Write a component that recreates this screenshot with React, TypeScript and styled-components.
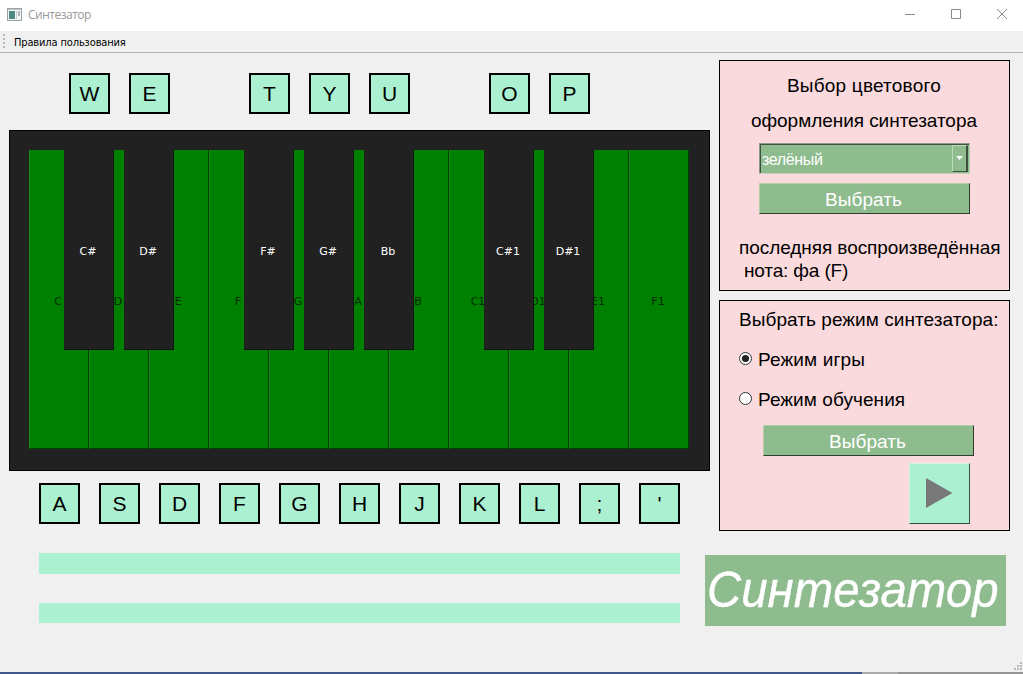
import React from "react";
import styled, { createGlobalStyle } from "styled-components";

const GlobalStyle = createGlobalStyle`
  * { box-sizing: border-box; }
  body { margin: 0; background: #f0f0f0; overflow: hidden; }
`;

const Window = styled.div`
  width: 1023px;
  height: 674px;
  display: flex;
  flex-direction: column;
  background: #f0f0f0;
  color: #000;
  font-family: "Liberation Sans", Arial, sans-serif;
  white-space: nowrap;
`;

const TitleBar = styled.header`
  height: 31px;
  flex: none;
  display: flex;
  align-items: center;
  padding: 0 15px 3px 7px;
  background: #fff;
`;

const AppIcon = styled.svg`
  width: 15px;
  height: 13px;
  margin-right: 6px;
  flex: none;
`;

const Title = styled.span`
  flex: 1;
  color: #999;
  font: 12px/16px "Open Sans", sans-serif;
  letter-spacing: -0.5px;
  padding-top: 2px;
`;

const WindowControls = styled.div`
  display: flex;
  gap: 34px;
`;

const ControlIcon = styled.svg`
  width: 12px;
  height: 12px;
  fill: none;
  stroke: #8a8a8a;
`;

const MenuBar = styled.nav`
  height: 22px;
  flex: none;
  display: flex;
  align-items: center;
  padding-left: 3px;
  border-bottom: 1px solid #b6b3b8;
`;

const Handle = styled.svg`
  width: 3px;
  height: 15px;
  margin-right: 8px;
  fill: #b8b8b8;
`;

const MenuItem = styled.span`
  font: 11px/14px "DejaVu Sans Condensed", "DejaVu Sans", sans-serif;
  letter-spacing: -0.14px;
  padding-top: 2px;
`;

const Body = styled.main`
  flex: 1;
  display: flex;
  align-items: flex-start;
`;

const Instrument = styled.section`
  width: 701px;
  margin-left: 9px;
  padding-top: 20px;
  flex: none;
`;

const CapRow = styled.div<{ $indent: number }>`
  display: flex;
  gap: 19px;
  padding-left: ${(p) => p.$indent}px;
`;

const Cap = styled.kbd`
  width: 41px;
  height: 41px;
  display: grid;
  place-items: center;
  border: 2px solid #000;
  background: #abf0d1;
  font: 21px/24px "Liberation Sans", Arial, sans-serif;
`;

const CapGap = styled.span`
  width: 41px;
`;

const Piano = styled.div`
  position: relative;
  width: 701px;
  height: 341px;
  margin: 16px 0 12px;
  padding: 19px 19px 0;
  border: 1px solid #000;
  background: #212121;
`;

const WhiteKeys = styled.div`
  display: flex;
`;

const WhiteKey = styled.div`
  width: 60px;
  height: 299px;
  display: grid;
  place-items: center;
  padding: 5px 2px 0 0;
  background: #008000;
  border: 1px solid;
  border-color: #008000 #004000 #004000 #1a8c1a;
  color: #002b00;
  font: 11px/14px "DejaVu Sans", sans-serif;
`;

const BlackKeys = styled.div`
  position: absolute;
  top: 19px;
  left: 54px;
  display: flex;
  gap: 10px;
`;

const BlackKey = styled.div`
  width: 50px;
  height: 200px;
  display: grid;
  place-items: center;
  padding: 4px 1px 0 0;
  background: #212121;
  border: solid #101510;
  border-width: 0 1px 1px 0;
  color: #fff;
  font: 11px/14px "DejaVu Sans", sans-serif;
`;

const BlackGap = styled.span`
  width: 50px;
`;

const Strip = styled.div<{ $top: number; $height: number }>`
  width: 641px;
  height: ${(p) => p.$height}px;
  margin: ${(p) => p.$top}px 0 0 30px;
  background: #abf0d1;
`;

const Sidebar = styled.aside`
  width: 305px;
  margin-left: -5px;
  padding-top: 7px;
  display: flex;
  flex-direction: column;
`;

const Panel = styled.section`
  width: 291px;
  height: 231px;
  margin: 0 0 9px 14px;
  display: flex;
  flex-direction: column;
  align-items: flex-start;
  border: 1px solid #000;
  background: #fadadd;
`;

const Line = styled.div<{ $top: number; $left: number; $spacing?: number }>`
  height: 22px;
  margin: ${(p) => p.$top}px 0 0 ${(p) => p.$left}px;
  font-size: 19px;
  line-height: 22px;
  letter-spacing: ${(p) => p.$spacing ?? 0}px;
`;

const Combo = styled.div`
  width: 211px;
  height: 31px;
  margin: 11px 0 0 39px;
  display: flex;
  align-items: stretch;
  justify-content: space-between;
  padding: 0 0 0 2px;
  background: #8fbc8f;
  border: 1px solid;
  border-color: #8a9a80 #b9cdb0 #c5cfb9 #8a9a80;
  box-shadow: inset 1px 1px 0 #3f543f;
  color: #fff;
  font-size: 16px;
  line-height: 31px;
  letter-spacing: -0.35px;
`;

const DropButton = styled.span`
  width: 16px;
  margin: 1px 1px 1px 0;
  padding: 0 1px 2px 0;
  display: grid;
  place-items: center;
  border: solid;
  border-width: 1px 2px 1px 1px;
  border-color: #bcdcbc #3d503d #3d503d #bcdcbc;
`;

const Button = styled.button<{ $top: number; $left: number }>`
  width: 211px;
  height: 31px;
  flex: none;
  margin: ${(p) => p.$top}px 0 0 ${(p) => p.$left}px;
  padding: 3px 2px 0 0;
  border: 1px solid;
  border-color: #b5ceaa #2f3d2f #2f3d2f #b5ceaa;
  background: #8fbc8f;
  color: #fff;
  font: 19px/22px "Liberation Sans", Arial, sans-serif;
  letter-spacing: 0.1px;
`;

const RadioRow = styled.label<{ $top: number; $spacing: number }>`
  height: 22px;
  margin: ${(p) => p.$top}px 0 0 19px;
  display: flex;
  align-items: center;
  gap: 6px;
  font-size: 19px;
  line-height: 22px;
  letter-spacing: ${(p) => p.$spacing}px;
`;

const RadioMark = styled.svg`
  width: 13px;
  height: 13px;
  margin-bottom: 3px;
`;

const PlayButton = styled.button`
  width: 61px;
  height: 61px;
  margin: 7px 0 0 189px;
  padding: 0;
  border: 1px solid;
  border-color: #d5f4e4 #34504a #34504a #d5f4e4;
  background: #abf0d1;

  svg { display: block; }
`;

const Banner = styled.div`
  width: 301px;
  height: 71px;
  margin-top: 15px;
  padding-left: 2px;
  background: #8fbc8f;
  color: #fff;
  font-size: 50px;
  font-style: italic;
  line-height: 70px;
`;

const BannerText = styled.span`
  display: inline-block;
  transform: scaleX(0.948);
  transform-origin: left center;
  -webkit-text-stroke: 0.4px #fff;
`;

const StatusRow = styled.footer`
  height: 12px;
  flex: none;
  display: flex;
  justify-content: flex-end;
  padding: 1px 0 0;
`;

const BottomEdge = styled.div`
  height: 2px;
  flex: none;
  background: linear-gradient(90deg, #40598a 0 862px, #acacac 862px 898px, #959595 898px);
`;

const dots = (points: number[][]) =>
  points.map(([x, y]) => <rect key={`${x}-${y}`} x={x} y={y} width="2" height="2" />);

function Radio({ checked }: { checked?: boolean }) {
  return (
    <RadioMark viewBox="0 0 13 13">
      <circle cx="6.5" cy="6.5" r="6" fill="#fff" stroke="#333" />
      {checked && <circle cx="6.5" cy="6.5" r="3.6" fill="#222" />}
    </RadioMark>
  );
}

const upperCaps = ["W", "E", "", "T", "Y", "U", "", "O", "P"];
const lowerCaps = ["A", "S", "D", "F", "G", "H", "J", "K", "L", ";", "'"];
const whiteNotes = ["C", "D", "E", "F", "G", "A", "B", "C1", "D1", "E1", "F1"];
const blackNotes = ["C#", "D#", "", "F#", "G#", "Bb", "", "C#1", "D#1"];

export default function App() {
  return (
    <Window>
      <GlobalStyle />
      <TitleBar>
        <AppIcon viewBox="0 0 15 13">
          <rect x=".5" y=".5" width="14" height="12" fill="#f4f6f6" stroke="#9aa3a5" />
          <rect x="1" y="1" width="13" height="1" fill="#bcc6c8" />
          <rect x="2" y="3" width="6" height="8" fill="#4d8a83" />
          <rect x="9" y="3" width="1" height="8" fill="#c8cece" />
          <rect x="11" y="3" width="2" height="5" fill="#a9b6b6" />
        </AppIcon>
        <Title>Синтезатор</Title>
        <WindowControls>
          <ControlIcon viewBox="0 0 12 12"><path d="M1 6.500h10" /></ControlIcon>
          <ControlIcon viewBox="0 0 12 12"><path d="M1.500 1.500h9v9h-9z" /></ControlIcon>
          <ControlIcon viewBox="0 0 12 12"><path d="M1 1l10 10M11 1L1 11" /></ControlIcon>
        </WindowControls>
      </TitleBar>
      <MenuBar>
        <Handle viewBox="0 0 3 15">{dots([[0, 0], [0, 4], [0, 8], [0, 12]])}</Handle>
        <MenuItem>Правила пользования</MenuItem>
      </MenuBar>
      <Body>
        <Instrument>
          <CapRow $indent={60}>
            {upperCaps.map((c, i) => (c ? <Cap key={i}>{c}</Cap> : <CapGap key={i} />))}
          </CapRow>
          <Piano>
            <WhiteKeys>
              {whiteNotes.map((n) => <WhiteKey key={n}>{n}</WhiteKey>)}
            </WhiteKeys>
            <BlackKeys>
              {blackNotes.map((n, i) => (n ? <BlackKey key={i}>{n}</BlackKey> : <BlackGap key={i} />))}
            </BlackKeys>
          </Piano>
          <CapRow $indent={30}>
            {lowerCaps.map((c) => <Cap key={c}>{c}</Cap>)}
          </CapRow>
          <Strip $top={29} $height={21} />
          <Strip $top={29} $height={20} />
        </Instrument>
        <Sidebar>
          <Panel>
            <Line $top={14} $left={67} $spacing={0.2}>Выбор цветового</Line>
            <Line $top={13} $left={31} $spacing={-0.05}>оформления синтезатора</Line>
            <Combo>
              зелёный
              <DropButton>
                <svg width="7" height="4" viewBox="0 0 7 4"><path d="M0 0h7L3.500 4z" fill="#fff" /></svg>
              </DropButton>
            </Combo>
            <Button $top={9} $left={39}>Выбрать</Button>
            <Line $top={23} $left={19} $spacing={-0.07}>последняя воспроизведённая</Line>
            <Line $top={1} $left={24} $spacing={-0.15}>нота: фа (F)</Line>
          </Panel>
          <Panel>
            <Line $top={8} $left={19} $spacing={0.06}>Выбрать режим синтезатора:</Line>
            <RadioRow $top={18} $spacing={0.15}><Radio checked />Режим игры</RadioRow>
            <RadioRow $top={18} $spacing={0.07}><Radio />Режим обучения</RadioRow>
            <Button $top={14} $left={43}>Выбрать</Button>
            <PlayButton aria-label="Играть">
              <svg width="59" height="59" viewBox="0 0 59 59"><path d="M16 14l26.500 15L16 44z" fill="#787878" /></svg>
            </PlayButton>
          </Panel>
          <Banner><BannerText>Синтезатор</BannerText></Banner>
        </Sidebar>
      </Body>
      <StatusRow>
        <svg width="10" height="10" viewBox="0 0 10 10" fill="#b9b9b9">
          {dots([[7, 1], [4, 4], [7, 4], [1, 7], [4, 7], [7, 7]])}
        </svg>
      </StatusRow>
      <BottomEdge />
    </Window>
  );
}
